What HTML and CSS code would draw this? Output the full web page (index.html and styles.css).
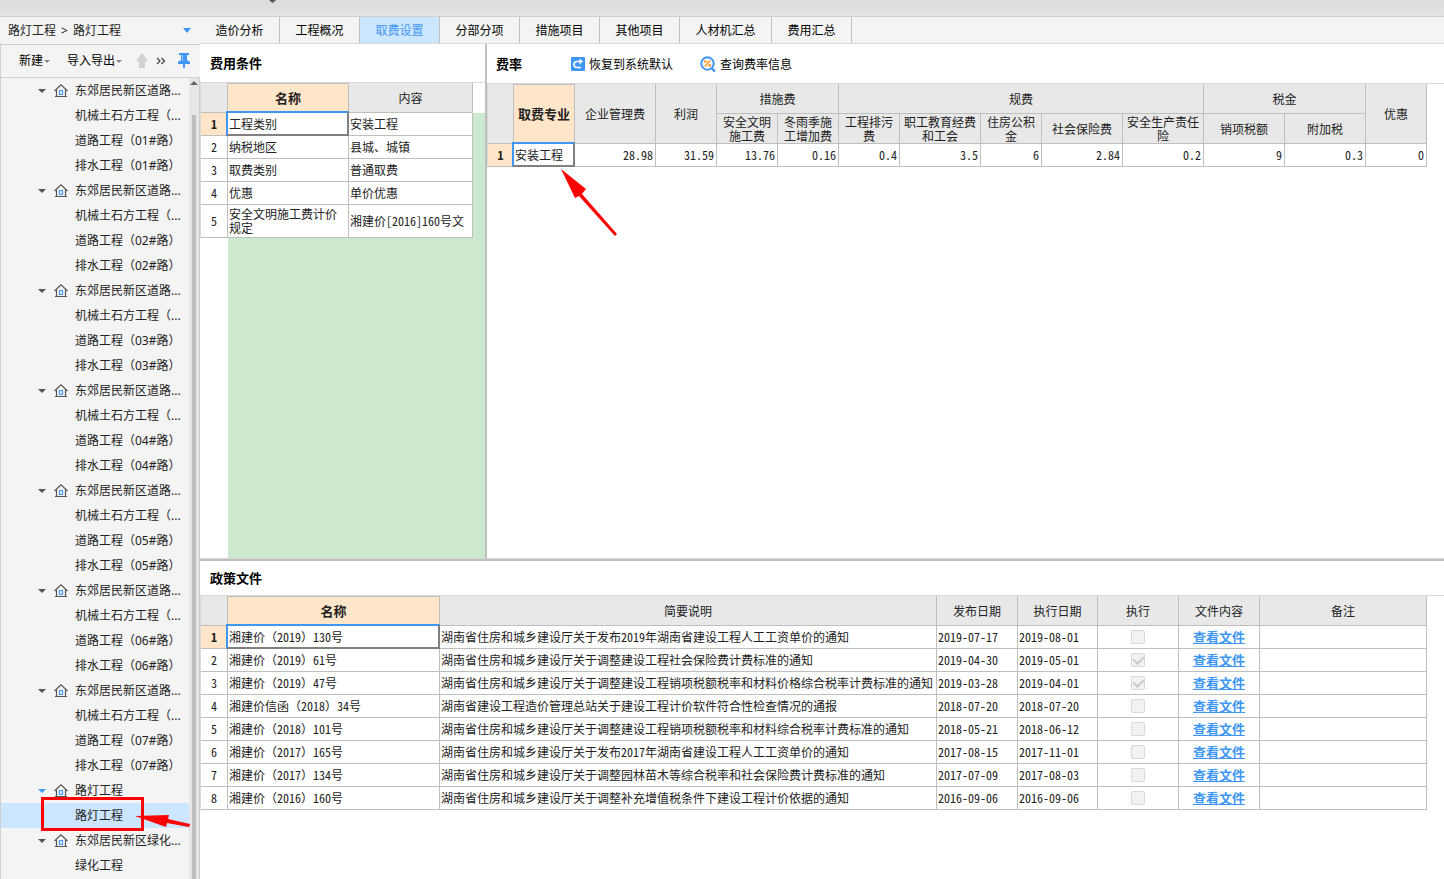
FILE: index.html
```html
<!DOCTYPE html>
<html lang="zh-CN">
<head>
<meta charset="utf-8">
<title>取费设置</title>
<link rel="stylesheet" href="styles.css">
</head>
<body>
<svg class="defs" aria-hidden="true">
  <symbol id="home" viewBox="0 0 14 13"><path d="M.5 7 7 .8 13.500 7M2.500 6v6.500M11.500 6v6.500M1 12.500h12" fill="none" stroke="#555" stroke-width="1.200"/><path d="M5.500 6.500h3v4h-3z" fill="none" stroke="#4096f5" stroke-width="1.200"/></symbol>
  <symbol id="caret" viewBox="0 0 8 4"><path d="M0 0h8L4 4z" fill="currentColor"/></symbol>
</svg>
<div class="app">
  <header class="topbar"><svg class="topbar-caret" viewBox="0 0 8 4"><path d="M0 0h7L3.500 3z" fill="#555"/></svg></header>
  <div class="body">
    <aside class="sidebar">
      <button class="crumb"><span>路灯工程</span><span>&gt;</span><span>路灯工程</span><svg class="crumb-caret" viewBox="0 0 8 5"><path d="M0 0h8L4 5z" fill="#4096f5"/></svg></button>
      <div class="tools">
        <button class="tool tool-new">新建<svg class="mini" viewBox="0 0 6 3"><path d="M0 0h6L3 3z" fill="#888"/></svg></button>
        <button class="tool tool-io">导入导出<svg class="mini" viewBox="0 0 6 3"><path d="M0 0h6L3 3z" fill="#888"/></svg></button>
        <button class="tool tool-up" aria-label="上移"><svg width="12" height="16" viewBox="0 0 12 16"><path d="M6 0l6 8H9v7H3V8H0z" fill="#d2d2d2"/></svg></button>
        <button class="tool tool-more" aria-label="更多"><svg width="10" height="8" viewBox="0 0 10 8"><path d="M1 1l3 3-3 3M5.500 1l3 3-3 3" fill="none" stroke="#444" stroke-width="1.300"/></svg></button>
        <button class="tool" aria-label="固定"><svg width="12" height="16" viewBox="0 0 12 16"><path d="M1 0h10v2H9v5l3 2v2H7v3l-1 2-1-2v-3H0V9l3-2V2H1z" fill="#4096f5"/><path d="M4 2h1v6H4z" fill="#a5cffc"/></svg></button>
      </div>
      <div class="tree-wrap">
        <ul class="tree">
          <li class="node group"><svg class="caret"><use href="#caret"/></svg><svg class="home"><use href="#home"/></svg>东郊居民新区道路...</li>
          <li class="node">机械土石方工程（...</li><li class="node">道路工程（01#路）</li><li class="node">排水工程（01#路）</li>
          <li class="node group"><svg class="caret"><use href="#caret"/></svg><svg class="home"><use href="#home"/></svg>东郊居民新区道路...</li>
          <li class="node">机械土石方工程（...</li><li class="node">道路工程（02#路）</li><li class="node">排水工程（02#路）</li>
          <li class="node group"><svg class="caret"><use href="#caret"/></svg><svg class="home"><use href="#home"/></svg>东郊居民新区道路...</li>
          <li class="node">机械土石方工程（...</li><li class="node">道路工程（03#路）</li><li class="node">排水工程（03#路）</li>
          <li class="node group"><svg class="caret"><use href="#caret"/></svg><svg class="home"><use href="#home"/></svg>东郊居民新区道路...</li>
          <li class="node">机械土石方工程（...</li><li class="node">道路工程（04#路）</li><li class="node">排水工程（04#路）</li>
          <li class="node group"><svg class="caret"><use href="#caret"/></svg><svg class="home"><use href="#home"/></svg>东郊居民新区道路...</li>
          <li class="node">机械土石方工程（...</li><li class="node">道路工程（05#路）</li><li class="node">排水工程（05#路）</li>
          <li class="node group"><svg class="caret"><use href="#caret"/></svg><svg class="home"><use href="#home"/></svg>东郊居民新区道路...</li>
          <li class="node">机械土石方工程（...</li><li class="node">道路工程（06#路）</li><li class="node">排水工程（06#路）</li>
          <li class="node group"><svg class="caret"><use href="#caret"/></svg><svg class="home"><use href="#home"/></svg>东郊居民新区道路...</li>
          <li class="node">机械土石方工程（...</li><li class="node">道路工程（07#路）</li><li class="node">排水工程（07#路）</li>
          <li class="node group open"><svg class="caret"><use href="#caret"/></svg><svg class="home"><use href="#home"/></svg>路灯工程</li>
          <li class="node selected">路灯工程<span class="mark-box"></span><svg class="mark-arrow" viewBox="0 0 56 16"><path d="M0 5 34 4l-1 4 22 5v1l-1 2-22-4-1 4z" fill="#f00"/></svg></li>
          <li class="node group"><svg class="caret"><use href="#caret"/></svg><svg class="home"><use href="#home"/></svg>东郊居民新区绿化...</li>
          <li class="node">绿化工程</li>
        </ul>
        <div class="scroll"><svg viewBox="0 0 8 4"><path d="M0 4h8L4 0z" fill="#666"/></svg><div class="thumb"></div></div>
      </div>
    </aside>
    <main class="main">
      <nav class="tabs">
        <button class="tab">造价分析</button><button class="tab">工程概况</button><button class="tab active">取费设置</button><button class="tab">分部分项</button><button class="tab">措施项目</button><button class="tab">其他项目</button><button class="tab wide">人材机汇总</button><button class="tab">费用汇总</button>
      </nav>
      <div class="upper">
        <section class="pane conditions">
          <h2 class="title">费用条件</h2>
          <div class="cond-body">
            <table class="grid cond">
              <colgroup><col class="c-no"><col class="c-cname"><col class="c-cval"></colgroup>
              <thead><tr><th></th><th class="hot">名称</th><th>内容</th></tr></thead>
              <tbody>
                <tr><th class="hot">1</th><td class="cursor">工程类别</td><td>安装工程</td></tr>
                <tr><th>2</th><td>纳税地区</td><td>县城、城镇</td></tr>
                <tr><th>3</th><td>取费类别</td><td>普通取费</td></tr>
                <tr><th>4</th><td>优惠</td><td>单价优惠</td></tr>
                <tr class="tall"><th>5</th><td>安全文明施工费计价规定</td><td>湘建价[2016]160号文</td></tr>
              </tbody>
            </table>
          </div>
        </section>
        <section class="pane rates">
          <div class="title rates-title">
            <h2>费率</h2>
            <button class="action restore"><svg width="14" height="14" viewBox="0 0 14 14"><rect width="14" height="14" rx="1" fill="#4096f5"/><path d="M9 4.500H6a3 3 0 0 0 0 6h4" fill="none" stroke="#fff" stroke-width="1.600"/><path d="M8.500 1.500 12 4.500 8.500 7.500z" fill="#fff"/></svg>恢复到系统默认</button>
            <button class="action"><svg width="16" height="16" viewBox="0 0 16 16"><circle cx="7.500" cy="7.500" r="6.200" fill="#fff" stroke="#4096f5" stroke-width="2"/><path d="m11.500 12 3.500 3.500" stroke="#4096f5" stroke-width="2.400"/><path d="m4.800 10.500 5.400-6" stroke="#ff9a1f" stroke-width="1.500"/><circle cx="5.400" cy="5.600" r="1.400" fill="#ff9a1f"/><circle cx="9.600" cy="9.400" r="1.400" fill="#ff9a1f"/></svg>查询费率信息</button>
          </div>
          <table class="grid rate">
            <colgroup><col class="c-rno"><col class="c-s"><col class="c-l"><col class="c-s"><col class="c-s"><col class="c-s"><col class="c-s"><col class="c-l"><col class="c-s"><col class="c-l"><col class="c-l"><col class="c-l"><col class="c-l"><col class="c-s"></colgroup>
            <thead>
              <tr><th rowspan="2"></th><th rowspan="2" class="hot">取费专业</th><th rowspan="2">企业管理费</th><th rowspan="2">利润</th><th colspan="2">措施费</th><th colspan="5">规费</th><th colspan="2">税金</th><th rowspan="2">优惠</th></tr>
              <tr><th>安全文明<br>施工费</th><th>冬雨季施<br>工增加费</th><th>工程排污<br>费</th><th>职工教育经费<br>和工会</th><th>住房公积<br>金</th><th>社会保险费</th><th>安全生产责任<br>险</th><th>销项税额</th><th>附加税</th></tr>
            </thead>
            <tbody><tr><th class="hot">1</th><td class="cursor name">安装工程</td><td>28.98</td><td>31.59</td><td>13.76</td><td>0.16</td><td>0.4</td><td>3.5</td><td>6</td><td>2.84</td><td>0.2</td><td>9</td><td>0.3</td><td>0</td></tr></tbody>
          </table>
          <svg class="pointer" viewBox="0 0 60 70"><path d="M1 1 26 21 22 26 57 66l-2 2L19 28l-4 2z" fill="#f00"/></svg>
        </section>
      </div>
      <section class="policies">
        <h2 class="title">政策文件</h2>
        <table class="grid policy">
          <colgroup><col class="c-no"><col class="c-pname"><col class="c-desc"><col class="c-l"><col class="c-date"><col class="c-l"><col class="c-l"><col class="c-note"></colgroup>
          <thead><tr><th></th><th class="hot">名称</th><th>简要说明</th><th>发布日期</th><th>执行日期</th><th>执行</th><th>文件内容</th><th>备注</th></tr></thead>
          <tbody>
            <tr><th class="hot">1</th><td class="cursor">湘建价（2019）130号</td><td>湖南省住房和城乡建设厅关于发布2019年湖南省建设工程人工工资单价的通知</td><td>2019-07-17</td><td>2019-08-01</td><td class="mid"><input type="checkbox" aria-label="执行" disabled></td><td class="mid"><a href="#">查看文件</a></td><td></td></tr>
            <tr><th>2</th><td>湘建价（2019）61号</td><td>湖南省住房和城乡建设厅关于调整建设工程社会保险费计费标准的通知</td><td>2019-04-30</td><td>2019-05-01</td><td class="mid"><input type="checkbox" aria-label="执行" checked disabled></td><td class="mid"><a href="#">查看文件</a></td><td></td></tr>
            <tr><th>3</th><td>湘建价（2019）47号</td><td>湖南省住房和城乡建设厅关于调整建设工程销项税额税率和材料价格综合税率计费标准的通知</td><td>2019-03-28</td><td>2019-04-01</td><td class="mid"><input type="checkbox" aria-label="执行" checked disabled></td><td class="mid"><a href="#">查看文件</a></td><td></td></tr>
            <tr><th>4</th><td>湘建价信函（2018）34号</td><td>湖南省建设工程造价管理总站关于建设工程计价软件符合性检查情况的通报</td><td>2018-07-20</td><td>2018-07-20</td><td class="mid"><input type="checkbox" aria-label="执行" disabled></td><td class="mid"><a href="#">查看文件</a></td><td></td></tr>
            <tr><th>5</th><td>湘建价（2018）101号</td><td>湖南省住房和城乡建设厅关于调整建设工程销项税额税率和材料综合税率计费标准的通知</td><td>2018-05-21</td><td>2018-06-12</td><td class="mid"><input type="checkbox" aria-label="执行" disabled></td><td class="mid"><a href="#">查看文件</a></td><td></td></tr>
            <tr><th>6</th><td>湘建价（2017）165号</td><td>湖南省住房和城乡建设厅关于发布2017年湖南省建设工程人工工资单价的通知</td><td>2017-08-15</td><td>2017-11-01</td><td class="mid"><input type="checkbox" aria-label="执行" disabled></td><td class="mid"><a href="#">查看文件</a></td><td></td></tr>
            <tr><th>7</th><td>湘建价（2017）134号</td><td>湖南省住房和城乡建设厅关于调整园林苗木等综合税率和社会保险费计费标准的通知</td><td>2017-07-09</td><td>2017-08-03</td><td class="mid"><input type="checkbox" aria-label="执行" disabled></td><td class="mid"><a href="#">查看文件</a></td><td></td></tr>
            <tr><th>8</th><td>湘建价（2016）160号</td><td>湖南省住房和城乡建设厅关于调整补充增值税条件下建设工程计价依据的通知</td><td>2016-09-06</td><td>2016-09-06</td><td class="mid"><input type="checkbox" aria-label="执行" disabled></td><td class="mid"><a href="#">查看文件</a></td><td></td></tr>
          </tbody>
        </table>
      </section>
    </main>
  </div>
</div>
</body>
</html>
```
FILE: styles.css
```css
* { box-sizing: border-box; }
body { margin: 0; color: #222; background: #fff; font: 12px/14px "Noto Sans Mono CJK SC", "Noto Sans CJK SC", sans-serif; }
button { margin: 0; padding: 0; border: 0; background: none; color: inherit; font: inherit; white-space: nowrap; }
h2 { margin: 0; font-size: 13px; font-weight: 700; color: #000; }
svg { flex: none; }
.defs { position: absolute; width: 0; height: 0; }

.app { display: flex; flex-direction: column; height: 100vh; overflow: hidden; }
.topbar { flex: none; height: 17px; padding-left: 269px; background: linear-gradient(#dcdcdc, #e3e3e3); border-bottom: 1px solid #cfcfcf; }
.topbar-caret { display: block; width: 8px; height: 4px; }
.body { display: flex; flex: 1; min-height: 0; }

.sidebar { display: flex; flex-direction: column; flex: none; width: 200px; background: #f4f4f4; font-family: "Noto Sans", "Noto Sans CJK SC", sans-serif; }
.crumb { display: flex; align-items: center; gap: 5px; height: 27px; padding: 0 9px 0 8px; }
.crumb-caret { width: 8px; height: 5px; margin-left: auto; }
.tools { display: flex; align-items: center; height: 34px; padding: 0 10px 0 18px; border: 1px solid #d0d0d0; border-width: 1px 0 1px 1px; color: #000; }
.tool { display: flex; align-items: center; gap: 1px; }
.tool-new { margin-right: 17px; }
.tool-io { margin-right: 14px; }
.tool-up { margin-right: 8px; }
.tool-more { margin-right: auto; }
.mini { width: 6px; height: 3px; }
.tree-wrap { display: flex; flex: 1; min-height: 0; border-left: 1px solid #d0d0d0; }
.tree { flex: 1; min-width: 0; margin: 0; padding: 0; list-style: none; }
.node { position: relative; display: flex; align-items: center; height: 25px; padding-left: 74px; white-space: nowrap; }
.group { padding-left: 37px; }
.selected { background: #cce6ff; }
.caret { width: 8px; height: 4px; margin-right: 8px; color: #555; }
.open .caret { color: #4096f5; }
.home { width: 14px; height: 13px; margin-right: 7px; }
.mark-box { position: absolute; left: 40px; top: -6px; width: 103px; height: 34px; border: 3px solid #f00; z-index: 1; }
.mark-arrow { position: absolute; left: 134px; top: 8px; width: 56px; height: 16px; z-index: 1; }
.scroll { display: flex; flex-direction: column; align-items: center; flex: none; width: 11px; padding-top: 3px; background: #e6e6e6; border-right: 1px solid #d0d0d0; }
.scroll svg { width: 8px; height: 4px; }
.thumb { width: 4px; margin-top: 30px; flex: 1; background: #bfbfbf; }

.main { display: flex; flex-direction: column; flex: 1; min-width: 0; }
.tabs { display: flex; flex: none; height: 27px; background: #f4f4f4; border-bottom: 1px solid #d9d9d9; }
.tab { width: 80px; border-right: 1px solid #bfbfbf; color: #000; font-family: "Noto Sans CJK SC", sans-serif; }
.tab.wide { width: 92px; }
.tab.active { background: #cce6ff; color: #4096f5; }

.upper { display: flex; flex: none; height: 517px; border-bottom: 2px solid #bfbfbf; }
.pane { position: relative; display: flex; flex-direction: column; border-bottom: 1px solid #d9d9d9; }
.conditions { flex: none; width: 287px; border-right: 2px solid #bfbfbf; }
.rates { flex: 1; min-width: 0; }
.title { display: flex; align-items: center; flex: none; height: 39px; padding-left: 10px; border-bottom: 1px solid #d9d9d9; }
.rates-title { height: 40px; padding-left: 9px; }
.rates-title h2 { margin-right: 49px; }
.action { display: flex; align-items: center; gap: 4px; color: #000; }
.restore { margin-right: 27px; }
.cond-body { flex: 1; background: linear-gradient(#fff, #fff) 0 0 / 28px 100% no-repeat, linear-gradient(#fff, #fff) 0 0 / 100% 30px no-repeat, #cce8cf; }
.policies { flex: 1; }
.policies .title { height: 35px; }

.grid { flex: none; table-layout: fixed; width: 0; border-collapse: separate; border-spacing: 0; border-left: 1px solid #d9d9d9; align-self: flex-start; }
.grid th, .grid td { height: 23px; padding: 0; border: 0 solid #bfbfbf; border-width: 0 1px 1px 0; line-height: 14px; }
.grid th { font-weight: 400; text-align: center; }
.grid td { padding: 0 1px; background: #fff; text-align: left; }
.grid tbody th { background: #fff; }
.grid thead th { height: 30px; background: #e8e8e8; }
.grid .hot { background: #ffe6c8; font-size: 13px; font-weight: 700; }
.grid thead .hot { border-top-width: 1px; }
.grid tbody .hot { font-size: 12px; }
.grid .tall td, .grid .tall th { height: 33px; }
.policies .grid td { white-space: nowrap; }
.rate td { text-align: right; padding-right: 2px; }
.grid .name { text-align: left; }
.grid .mid { text-align: center; }
.grid .cursor { position: relative; }
.cursor::after { content: ""; position: absolute; inset: -2px -1px -1px -2px; border: 2px solid #4096f5; border-right-color: #808080; border-bottom-color: #808080; }
.c-no { width: 27px; }
.c-rno { width: 26px; }
.c-cname { width: 121px; }
.c-cval { width: 124px; }
.c-s { width: 61px; }
.c-l { width: 81px; }
.c-date { width: 80px; }
.c-pname { width: 212px; }
.c-desc { width: 497px; }
.c-note { width: 167px; }
.grid a { color: #4096f5; font-size: 13px; font-weight: 700; text-decoration: underline; }
.grid input { appearance: none; display: block; width: 14px; height: 14px; margin: 0 auto; border: 1px solid #d9d9d9; border-radius: 2px; background: #f2f2f2; }
.grid input:checked::after { content: ""; display: block; width: 5px; height: 8px; margin: 0 0 0 3px; border: solid #c8c8c8; border-width: 0 2px 2px 0; transform: rotate(45deg); }
.pointer { position: absolute; left: 73px; top: 124px; width: 60px; height: 70px; }
```
